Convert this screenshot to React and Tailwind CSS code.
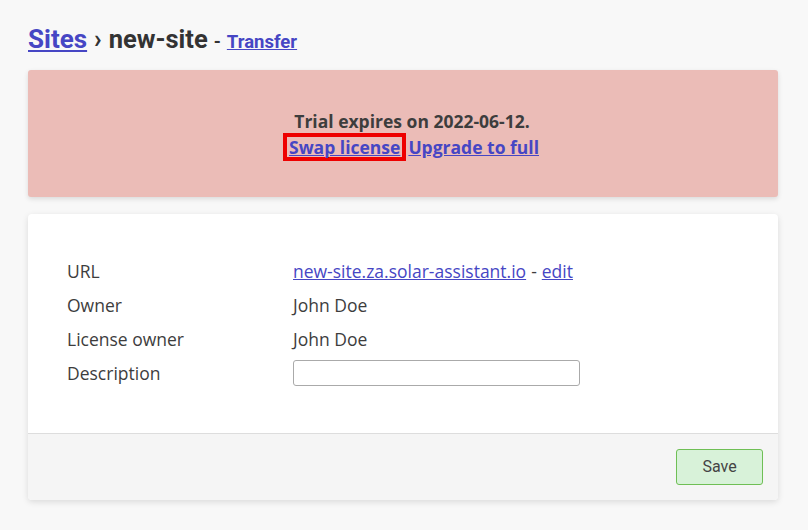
import React from 'react';

const Row = ({ label, children }) => (
  <div className="flex items-center h-[34px]">
    <div className="w-[226px] shrink-0">{label}</div>
    <div className="flex items-center">{children}</div>
  </div>
);

export default function App() {
  return (
    <div className="min-h-[530px] bg-[#f8f8f8] pl-[28px] pr-[30px] pt-[20px] text-[#3d3d3d] [font-family:'Open_Sans',sans-serif] text-[17.5px]">
      <h1 className="flex items-baseline [font-family:Roboto,sans-serif] font-bold text-[#333] h-[34px]">
        <a href="#" className="text-[26px] text-[#4646c4] underline">Sites</a>
        <span className="text-[25px] mx-[7px]">›</span>
        <span className="text-[25.5px]">new-site</span>
        <span className="text-[18px] mx-[6px]">-</span>
        <a href="#" className="text-[18.5px] text-[#4646c4] underline">Transfer</a>
      </h1>

      <div className="mt-[16px] bg-[#ebbcb7] rounded-[3px] shadow-[0_2px_5px_rgba(0,0,0,0.12)] pt-[39px] pb-[36px] pl-[16px] text-center font-bold">
        <div className="leading-[24px] pl-[2px]">Trial expires on 2022-06-12.</div>
        <div className="flex justify-center items-center gap-[2px]">
          <span className="border-[4px] border-[#ee0000] px-[2px] leading-[20px]">
            <a href="#" className="text-[#4646c4] underline">Swap license</a>
          </span>
          <a href="#" className="text-[#4646c4] underline leading-[20px]">Upgrade to full</a>
        </div>
      </div>

      <div className="mt-[17px] bg-white rounded-[4px] shadow-[0_2px_6px_rgba(0,0,0,0.12)] overflow-hidden">
        <div className="pl-[39px] pt-[40px] pb-[43px]">
          <Row label="URL">
            <a href="#" className="text-[#4646c4] underline">new-site.za.solar-assistant.io</a>
            <span className="mx-[5px]">-</span>
            <a href="#" className="text-[#4646c4] underline">edit</a>
          </Row>
          <Row label="Owner">John Doe</Row>
          <Row label="License owner">John Doe</Row>
          <Row label="Description">
            <input type="text" className="w-[287px] h-[26px] border border-[#aaa] rounded-[3px] bg-white" />
          </Row>
        </div>
        <div className="bg-[#f5f5f5] border-t border-[#ddd] h-[67px] flex justify-end items-start pt-[15px] pr-[15px]">
          <button className="w-[87px] h-[36px] bg-[#d8f2d9] border border-[#6fbf55] rounded-[3px] text-[#444] [font-family:Roboto,sans-serif] text-[16px]">
            Save
          </button>
        </div>
      </div>
    </div>
  );
}
